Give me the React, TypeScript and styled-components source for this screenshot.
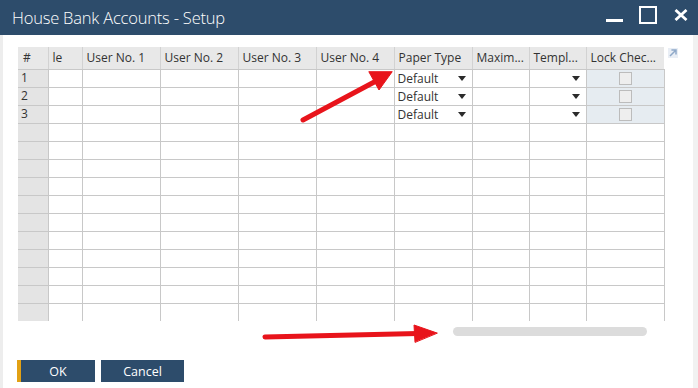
import React from 'react';
import styled, { createGlobalStyle } from 'styled-components';

const GlobalStyle = createGlobalStyle`
  html, body {
    margin: 0;
    padding: 0;
    background: #ffffff;
  }
  body {
    font-family: 'Open Sans', 'Noto Sans', sans-serif;
  }
`;

type Col = { title: string; width: number; kind?: 'num' | 'select' | 'combo' | 'check' };

const columns: Col[] = [
  { title: '#', width: 30, kind: 'num' },
  { title: 'le', width: 34 },
  { title: 'User No. 1', width: 78 },
  { title: 'User No. 2', width: 78 },
  { title: 'User No. 3', width: 78 },
  { title: 'User No. 4', width: 78 },
  { title: 'Paper Type', width: 78, kind: 'select' },
  { title: 'Maxim...', width: 57 },
  { title: 'Templ...', width: 57, kind: 'combo' },
  { title: 'Lock Chec...', width: 78, kind: 'check' },
];

const filledRows = 3;
const totalRows = 14;

const App: React.FC = () => {
  const rows = Array.from({ length: totalRows }, (_, i) => i);
  return (
    <Window>
      <GlobalStyle />
      <TitleBar>
        <Title>House Bank Accounts - Setup</Title>
        <WindowControls>
          <MinimizeBtn />
          <MaximizeBtn />
          <CloseBtn viewBox="0 0 14 12">
            <path d="M1.5 1 L12.5 11 M12.5 1 L1.5 11" stroke="#fff" strokeWidth="2.8" />
          </CloseBtn>
        </WindowControls>
      </TitleBar>

      <Body>
        <GridRow>
          <Grid>
            <colgroup>
              {columns.map((c) => (
                <col key={c.title} style={{ width: c.width }} />
              ))}
            </colgroup>
            <thead>
              <tr>
                {columns.map((c) => (
                  <HeadCell key={c.title}>{c.title}</HeadCell>
                ))}
              </tr>
            </thead>
            <tbody>
              {rows.map((r) => {
                const filled = r < filledRows;
                const last = r === totalRows - 1;
                return (
                  <tr key={r}>
                    {columns.map((c) => {
                      if (c.kind === 'num') {
                        return <NumCell key={c.title} $last={last}>{filled ? r + 1 : ''}</NumCell>;
                      }
                      if (filled && c.kind === 'select') {
                        return (
                          <Cell key={c.title}>
                            <Select>
                              <span>Default</span>
                              <Caret />
                            </Select>
                          </Cell>
                        );
                      }
                      if (filled && c.kind === 'combo') {
                        return (
                          <Cell key={c.title}>
                            <Select $right>
                              <Caret />
                            </Select>
                          </Cell>
                        );
                      }
                      if (filled && c.kind === 'check') {
                        return (
                          <Cell key={c.title} $tinted>
                            <CheckWrap>
                              <CheckBox />
                            </CheckWrap>
                          </Cell>
                        );
                      }
                      return <Cell key={c.title} $last={last} />;
                    })}
                  </tr>
                );
              })}
            </tbody>
          </Grid>
          <ExpandIcon viewBox="0 0 10 10">
            <rect x="0" y="0" width="10" height="10" fill="#e9eef5" />
            <path d="M2 8 L8 2 M3.4 2 L8 2 L8 6.6" stroke="#8fa9c9" strokeWidth="1.5" fill="none" />
          </ExpandIcon>
        </GridRow>

        <ScrollTrack>
          <ScrollThumb />
        </ScrollTrack>

        <ButtonBar>
          <Button $primary>OK</Button>
          <Button $wide>Cancel</Button>
        </ButtonBar>
      </Body>

      <Annotations viewBox="0 0 698 388">
        <g fill="#e8141b" stroke="#e8141b" strokeLinecap="round">
          <line x1="303" y1="120" x2="378" y2="80" strokeWidth="5" />
          <polygon points="392,72 379,90 369,72" strokeWidth="1" strokeLinejoin="round" />
          <line x1="265" y1="337" x2="418" y2="333.5" strokeWidth="5" />
          <polygon points="437,333 414,325 415,342" strokeWidth="1" strokeLinejoin="round" />
        </g>
      </Annotations>
    </Window>
  );
};

const Window = styled.div`
  position: relative;
  width: 698px;
  height: 388px;
  overflow: hidden;
  display: flex;
  flex-direction: column;
  background: #ffffff;
`;

const TitleBar = styled.div`
  height: 35px;
  flex: none;
  background: #2d4c6b;
  display: flex;
  align-items: center;
  justify-content: space-between;
  padding: 0 10px 0 12px;
`;

const Title = styled.div`
  color: #ffffff;
  font-size: 16.5px;
  font-weight: 300;
  letter-spacing: -0.2px;
  margin-top: -1px;
`;

const WindowControls = styled.div`
  display: flex;
  align-items: center;
`;

const MinimizeBtn = styled.div`
  width: 17px;
  height: 3px;
  background: #ffffff;
  margin-top: 6px;
`;

const MaximizeBtn = styled.div`
  width: 14px;
  height: 14px;
  border: 2px solid #ffffff;
  margin-left: 16px;
  margin-top: -5px;
`;

const CloseBtn = styled.svg`
  width: 14px;
  height: 12px;
  margin-left: 17px;
  margin-top: -5px;
`;

const Body = styled.div`
  flex: 1;
  display: flex;
  flex-direction: column;
  padding: 12px 0 0 15px;
  border-left: 3px solid #ededed;
  border-right: 5px solid #f1f1f1;
`;

const GridRow = styled.div`
  display: flex;
  align-items: flex-start;
`;

const Grid = styled.table`
  border-collapse: collapse;
  table-layout: fixed;
  width: 646px;
  font-size: 12px;
  color: #333333;
`;

const HeadCell = styled.th`
  height: 22px;
  padding: 0 0 0 4px;
  background: #e8e8e8;
  border-right: 1px solid #d2d2d2;
  border-bottom: 1px solid #c8c8c8;
  font-weight: 400;
  text-align: left;
  white-space: nowrap;
  overflow: hidden;
  box-sizing: border-box;
  &:first-child {
    padding-left: 5px;
  }
  &:last-child {
    border-right: none;
  }
`;

const Cell = styled.td<{ $tinted?: boolean; $last?: boolean }>`
  height: 18px;
  padding: 0;
  box-sizing: border-box;
  background: ${(p) => (p.$tinted ? '#e6ecf1' : '#ffffff')};
  border-right: 1px solid #c8c8c8;
  border-bottom: ${(p) => (p.$last ? 'none' : '1px solid #c8c8c8')};
`;

const NumCell = styled.td<{ $last?: boolean }>`
  height: 18px;
  padding: 0 0 0 3px;
  box-sizing: border-box;
  background: #e4e4e4;
  border-right: 1px solid #c8c8c8;
  border-bottom: ${(p) => (p.$last ? 'none' : '1px solid #c8c8c8')};
  font-size: 12px;
  line-height: 16px;
`;

const Select = styled.div<{ $right?: boolean }>`
  display: flex;
  align-items: center;
  justify-content: ${(p) => (p.$right ? 'flex-end' : 'space-between')};
  padding: 0 6px 0 3px;
  height: 17px;
  font-size: 12px;
`;

const Caret = styled.span`
  width: 0;
  height: 0;
  border-left: 4px solid transparent;
  border-right: 4px solid transparent;
  border-top: 5px solid #2b2b2b;
`;

const CheckWrap = styled.div`
  display: flex;
  justify-content: center;
  align-items: center;
  height: 17px;
`;

const CheckBox = styled.div`
  width: 13px;
  height: 13px;
  box-sizing: border-box;
  border: 1px solid #bcbcbc;
  background: #eeeeee;
  margin-left: 1px;
`;

const ExpandIcon = styled.svg`
  width: 10px;
  height: 10px;
  margin-left: 3px;
  margin-top: 1px;
`;

const ScrollTrack = styled.div`
  width: 646px;
  display: flex;
  padding: 6px 0 0 435px;
  box-sizing: border-box;
`;

const ScrollThumb = styled.div`
  width: 194px;
  height: 9px;
  border-radius: 5px;
  background: #dcdcdc;
`;

const ButtonBar = styled.div`
  display: flex;
  gap: 6px;
  margin-top: 24px;
  margin-left: -1px;
`;

const Button = styled.div<{ $primary?: boolean; $wide?: boolean }>`
  width: ${(p) => (p.$wide ? '83px' : '78px')};
  height: 22px;
  box-sizing: border-box;
  background: #2d4c6b;
  border-left: ${(p) => (p.$primary ? '4px solid #e2a114' : 'none')};
  color: #ffffff;
  font-size: 12.5px;
  display: flex;
  align-items: center;
  justify-content: center;
`;

const Annotations = styled.svg`
  position: absolute;
  left: 0;
  top: 0;
  width: 698px;
  height: 388px;
  pointer-events: none;
`;

export default App;
